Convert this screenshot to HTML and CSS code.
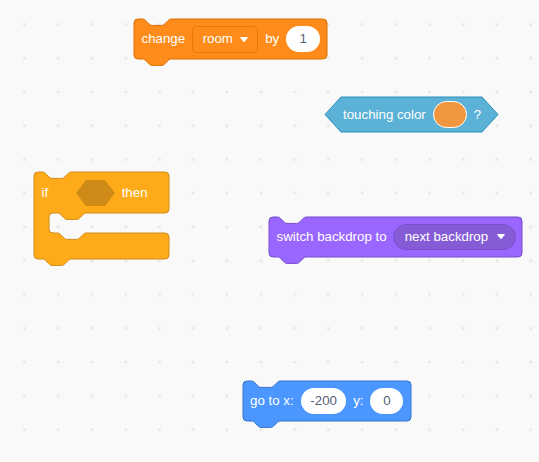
FILE: index.html
```html
<!DOCTYPE html>
<html>
<head>
<meta charset="utf-8">
<link rel="stylesheet" href="styles.css">
</head>
<body>
<div class="workspace">
  <svg class="grid" width="539" height="462">
    <defs>
      <pattern id="grid" width="33.75" height="33.75" patternUnits="userSpaceOnUse" x="7.625" y="7.625">
        <path d="M15.375 16.875h3M16.875 15.375v3" stroke="#e0e0e0" stroke-width="1" fill="none"/>
      </pattern>
    </defs>
    <rect width="539" height="462" fill="url(#grid)"/>
  </svg>

  <!-- change [room] by (1) -->
  <div class="block b-change">
    <svg class="shape" width="194" height="48"><path class="data" d="M0 4A4 4 0 0 1 4 0H8.5c1.6 0 2.4 .8 3.2 1.6l3.2 3.2c.8 .8 1.6 1.6 3.2 1.6h9.6c1.6 0 2.4-.8 3.2-1.6l3.2-3.2c.8-.8 1.6-1.6 3.2-1.6H189A4 4 0 0 1 193 4V36A4 4 0 0 1 189 40H37.3c-1.6 0-2.4 .8-3.2 1.6l-3.2 3.2c-.8 .8-1.6 1.6-3.2 1.6h-9.6c-1.6 0-2.4-.8-3.2-1.6l-3.2-3.2c-.8-.8-1.6-1.6-3.2-1.6H4A4 4 0 0 1 0 36Z"/></svg>
    <div class="row row-change">
      <span class="label">change</span>
      <span class="dropdown dd-data">room<svg class="caret" width="8" height="5" viewBox="0 0 8 5"><path d="M.8 .6h6.4L4 4.4Z"/></svg></span>
      <span class="label">by</span>
      <span class="num w34">1</span>
    </div>
  </div>

  <!-- touching color (  ) ? -->
  <div class="block b-touch">
    <svg class="shape" width="174" height="36"><path class="sensing" d="M16 0H157L173 17.5L157 35H16L0 17.5Z"/></svg>
    <div class="row row-touch">
      <span class="label">touching color</span>
      <span class="swatch"></span>
      <span class="label">?</span>
    </div>
  </div>

  <!-- if <> then -->
  <div class="block b-if">
    <svg class="shape" width="136" height="95"><path class="control" d="M0 4A4 4 0 0 1 4 0H8.5c1.6 0 2.4 .8 3.2 1.6l3.2 3.2c.8 .8 1.6 1.6 3.2 1.6h9.6c1.6 0 2.4-.8 3.2-1.6l3.2-3.2c.8-.8 1.6-1.6 3.2-1.6H131A4 4 0 0 1 135 4V37A4 4 0 0 1 131 41H52.3c-1.6 0-2.4 .8-3.2 1.6l-3.2 3.2c-.8 .8-1.6 1.6-3.2 1.6h-9.6c-1.6 0-2.4-.8-3.2-1.6l-3.2-3.2c-.8-.8-1.6-1.6-3.2-1.6H19A4 4 0 0 0 15 45V57A4 4 0 0 0 19 61H23.5c1.6 0 2.4 .8 3.2 1.6l3.2 3.2c.8 .8 1.6 1.6 3.2 1.6h9.6c1.6 0 2.4-.8 3.2-1.6l3.2-3.2c.8-.8 1.6-1.6 3.2-1.6H131A4 4 0 0 1 135 65V83A4 4 0 0 1 131 87H37.3c-1.6 0-2.4 .8-3.2 1.6l-3.2 3.2c-.8 .8-1.6 1.6-3.2 1.6h-9.6c-1.6 0-2.4-.8-3.2-1.6l-3.2-3.2c-.8-.8-1.6-1.6-3.2-1.6H4A4 4 0 0 1 0 83Z"/></svg>
    <div class="row row-if">
      <span class="label if-label">if</span>
      <svg class="slot" width="39" height="26" viewBox="0 0 39 26"><path d="M10 0H29L39 13L29 26H10L0 13Z"/></svg>
      <span class="label">then</span>
    </div>
  </div>

  <!-- switch backdrop to [next backdrop] -->
  <div class="block b-switch">
    <svg class="shape" width="254" height="48"><path class="looks" d="M0 4A4 4 0 0 1 4 0H8.5c1.6 0 2.4 .8 3.2 1.6l3.2 3.2c.8 .8 1.6 1.6 3.2 1.6h9.6c1.6 0 2.4-.8 3.2-1.6l3.2-3.2c.8-.8 1.6-1.6 3.2-1.6H249A4 4 0 0 1 253 4V36A4 4 0 0 1 249 40H37.3c-1.6 0-2.4 .8-3.2 1.6l-3.2 3.2c-.8 .8-1.6 1.6-3.2 1.6h-9.6c-1.6 0-2.4-.8-3.2-1.6l-3.2-3.2c-.8-.8-1.6-1.6-3.2-1.6H4A4 4 0 0 1 0 36Z"/></svg>
    <div class="row row-switch">
      <span class="label">switch backdrop to</span>
      <span class="dropdown dd-looks">next backdrop<svg class="caret" width="8" height="5" viewBox="0 0 8 5"><path d="M.8 .6h6.4L4 4.4Z"/></svg></span>
    </div>
  </div>

  <!-- go to x: (-200) y: (0) -->
  <div class="block b-goto">
    <svg class="shape" width="169" height="48"><path class="motion" d="M0 4A4 4 0 0 1 4 0H8.5c1.6 0 2.4 .8 3.2 1.6l3.2 3.2c.8 .8 1.6 1.6 3.2 1.6h9.6c1.6 0 2.4-.8 3.2-1.6l3.2-3.2c.8-.8 1.6-1.6 3.2-1.6H164A4 4 0 0 1 168 4V36A4 4 0 0 1 164 40H37.3c-1.6 0-2.4 .8-3.2 1.6l-3.2 3.2c-.8 .8-1.6 1.6-3.2 1.6h-9.6c-1.6 0-2.4-.8-3.2-1.6l-3.2-3.2c-.8-.8-1.6-1.6-3.2-1.6H4A4 4 0 0 1 0 36Z"/></svg>
    <div class="row row-goto">
      <span class="label">go to x:</span>
      <span class="num w45">-200</span>
      <span class="label">y:</span>
      <span class="num w33">0</span>
    </div>
  </div>
</div>
</body>
</html>
```

FILE: styles.css
```css
html, body {
  margin: 0;
  padding: 0;
}

body {
  width: 539px;
  height: 462px;
  overflow: hidden;
  background: #f9f9f9;
  font-family: "Liberation Sans", Arial, sans-serif;
}

.workspace {
  position: relative;
  width: 539px;
  height: 462px;
  overflow: hidden;
  background: #f9f9f9;
}

.grid {
  position: absolute;
  left: 0;
  top: 0;
}

.block {
  position: absolute;
}

.b-change { left: 134px; top: 19px; width: 193px; height: 40px; }
.b-touch  { left: 325px; top: 97px; width: 173px; height: 35px; }
.b-if     { left: 34px;  top: 172px; width: 135px; height: 87px; }
.b-switch { left: 269px; top: 216.5px; width: 253px; height: 40px; }
.b-goto   { left: 243px; top: 381px; width: 168px; height: 40px; }

.shape {
  position: absolute;
  left: 0;
  top: 0;
  overflow: visible;
}

.shape path { stroke-width: 1; }
.shape .data    { fill: #ff8c1a; stroke: #db6e00; }
.shape .sensing { fill: #5cb1d6; stroke: #2e8eb8; }
.shape .control { fill: #ffab19; stroke: #cf8b17; }
.shape .looks   { fill: #9966ff; stroke: #774dcb; }
.shape .motion  { fill: #4c97ff; stroke: #3373cc; }

.row {
  position: relative;
  display: flex;
  align-items: center;
  height: 40px;
  gap: 7px;
  padding-left: 7.5px;
  color: #ffffff;
  font-size: 13.3px;
  white-space: nowrap;
}

.row-touch {
  height: 35px;
  padding-left: 18px;
}

.row-if {
  height: 41px;
}

.row-if .if-label {
  margin-right: 20.5px;
}

.row-switch {
  gap: 6px;
}

.row-goto {
  padding-left: 7px;
}

.row-goto .w45 {
  margin-left: 0.5px;
}

.label {
  line-height: 16px;
}

.dropdown {
  display: flex;
  align-items: center;
  box-sizing: border-box;
  height: 27px;
  line-height: 16px;
}

.dd-data {
  width: 66px;
  padding-left: 9.5px;
  gap: 7px;
  background: #ff8c1a;
  border: 1px solid #e57a0c;
  border-radius: 4px;
}

.dd-looks {
  width: 123px;
  height: 26px;
  padding-left: 11px;
  gap: 9px;
  background: #855cd6;
  border: 1px solid #7a50cf;
  border-radius: 13px;
}

.caret path {
  fill: #ffffff;
  stroke: #ffffff;
  stroke-width: 1.2;
  stroke-linejoin: round;
}

.num {
  display: flex;
  align-items: center;
  justify-content: center;
  box-sizing: border-box;
  height: 26px;
  border-radius: 13px;
  background: #ffffff;
  color: #575e75;
  line-height: 16px;
}

.w34 { width: 34px; }
.w45 { width: 45px; }
.w33 { width: 33px; }

.swatch {
  box-sizing: border-box;
  width: 34px;
  height: 27px;
  border-radius: 13.5px;
  background: #f0963e;
  border: 1px solid #ffffff;
}

.slot path {
  fill: #cf8b17;
}
```
